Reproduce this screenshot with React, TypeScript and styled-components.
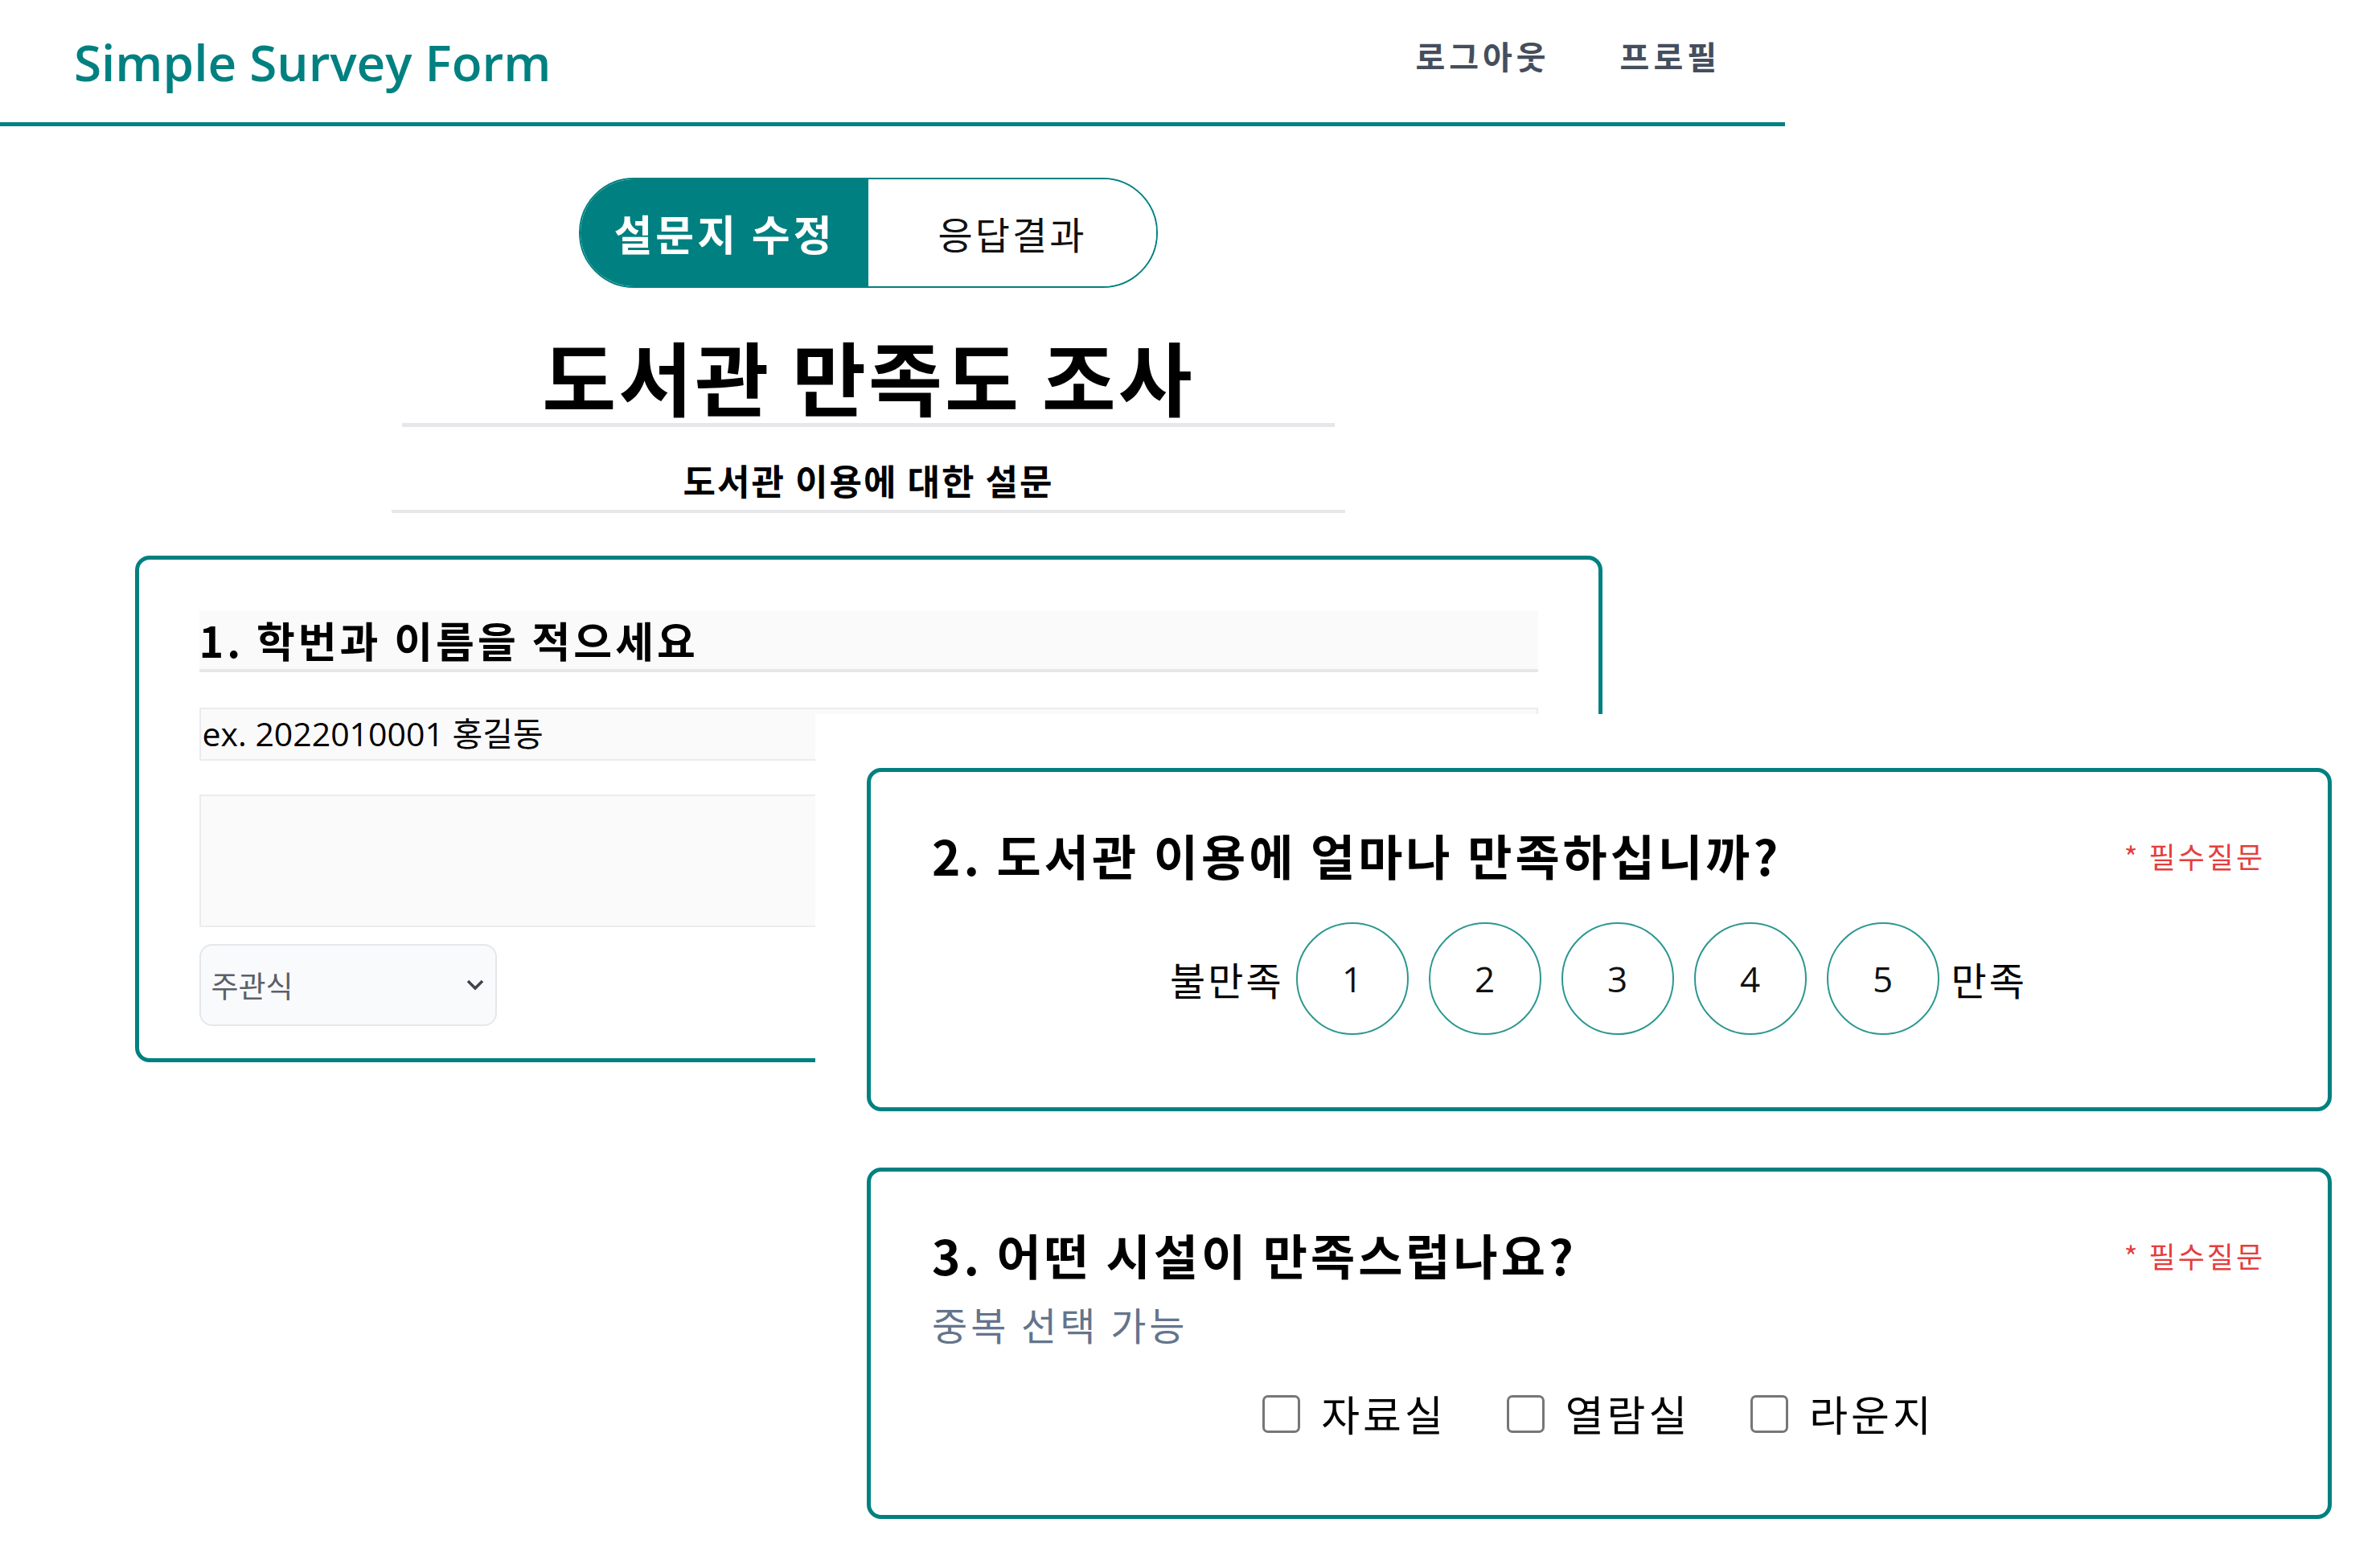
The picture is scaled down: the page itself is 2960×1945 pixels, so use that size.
import { styled, createGlobalStyle } from 'styled-components';

const teal = '#008080';

const GlobalStyle = createGlobalStyle`
  body {
    margin: 0;
    background: #fff;
    font-family: "Open Sans", "Noto Sans CJK KR", sans-serif;
    color: #000;
  }
  * { box-sizing: border-box; }
`

const Header = styled.header`
  width: 2220px;
  height: 157px;
  display: flex;
  justify-content: space-between;
  align-items: center;
  padding: 0 80px 0 92px;
  border-bottom: 5px solid ${teal};
`

const Brand = styled.h1`
  margin: 0;
  font-family: "Open Sans", sans-serif;
  font-size: 62px;
  font-weight: 600;
  color: ${teal};
  padding-top: 2px;
`

const Nav = styled.nav`
  display: flex;
  gap: 87px;
  padding-bottom: 14px;
`

const NavLink = styled.a`
  font-family: "Noto Sans CJK KR", sans-serif;
  font-size: 40px;
  font-weight: 700;
  letter-spacing: 5px;
  color: #454e5c;
  cursor: pointer;
`

const Main = styled.main`
  position: relative;
  width: 2160px;
  min-height: 1788px;
  display: flex;
  flex-direction: column;
  align-items: center;
  padding-top: 64px;
`

const Toggle = styled.div`
  display: flex;
  width: 720px;
  height: 137px;
  border: 2px solid ${teal};
  border-radius: 70px;
  overflow: hidden;
`

const ToggleItem = styled.button<{ $active?: boolean }>`
  flex: 1;
  border: none;
  margin: 0;
  font-family: "Noto Sans CJK KR", sans-serif;
  font-size: ${p => p.$active ? '52px' : '47px'};
  font-weight: ${p => p.$active ? 700 : 400};
  letter-spacing: ${p => p.$active ? '4px' : '3px'};
  background: ${p => p.$active ? teal : '#fff'};
  color: ${p => p.$active ? '#fff' : '#111'};
  cursor: pointer;
`

const SurveyTitle = styled.div`
  margin-top: 50px;
  width: 1160px;
  height: 123px;
  text-align: center;
  font-family: "Noto Sans CJK KR", sans-serif;
  font-size: 100px;
  line-height: 118px;
  font-weight: 700;
  letter-spacing: 3px;
  border-bottom: 5px solid #e5e7eb;
`

const SurveyDesc = styled.div`
  margin-top: 30px;
  width: 1186px;
  height: 77px;
  text-align: center;
  font-family: "Noto Sans CJK KR", sans-serif;
  font-size: 44px;
  line-height: 72px;
  font-weight: 700;
  letter-spacing: 2px;
  border-bottom: 4px solid #e5e7eb;
`

const Card = styled.section<{ $width?: number }>`
  width: ${p => p.$width ?? 1825}px;
  border: 5px solid ${teal};
  border-radius: 18px;
  background: #fff;
`

const EditCard = styled(Card)`
  margin-top: 53px;
  padding: 63px 75px 40px 75px;
  display: flex;
  flex-direction: column;
`

const QuestionInput = styled.div`
  height: 77px;
  background: #fafafa;
  border-bottom: 4px solid #e5e7eb;
  font-family: "Noto Sans CJK KR", sans-serif;
  font-size: 52px;
  line-height: 73px;
  font-weight: 700;
  letter-spacing: 4px;
`

const TextField = styled.div`
  margin-top: 44px;
  height: 66px;
  background: #fafafa;
  border: 2px solid #ececef;
  padding-left: 2px;
  font-size: 41px;
  line-height: 60px;
`

const TextArea = styled.div`
  margin-top: 42px;
  height: 165px;
  background: #fafafa;
  border: 2px solid #ececef;
`

const Select = styled.div`
  margin-top: 21px;
  width: 370px;
  height: 102px;
  border: 2px solid #e5e7eb;
  border-radius: 16px;
  background: #f9fafb;
  display: flex;
  align-items: center;
  justify-content: space-between;
  padding: 0 14px 0 13px;
  font-family: "Noto Sans CJK KR", sans-serif;
  font-size: 37px;
  color: #5b6068;
`

const DragLayer = styled.div`
  position: absolute;
  left: 1014px;
  top: 731px;
  width: 1946px;
  background: #fff;
  padding: 67px 0 0 64px;
  display: flex;
  flex-direction: column;
  gap: 70px;
`

const ViewCard = styled(Card)`
  padding: 64px 78px 0 76px;
`

const TitleRow = styled.div`
  display: flex;
  justify-content: space-between;
  align-items: center;
`

const QuestionTitle = styled.h2`
  margin: 0;
  font-family: "Noto Sans CJK KR", sans-serif;
  font-size: 60px;
  line-height: 78px;
  font-weight: 700;
  letter-spacing: 4px;
`

const Required = styled.span`
  font-family: "Noto Sans CJK KR", sans-serif;
  font-size: 36px;
  letter-spacing: 3px;
  color: #e53e3e;
  padding-top: 2px;
`

const Hint = styled.div`
  margin-top: 16px;
  font-family: "Noto Sans CJK KR", sans-serif;
  font-size: 48px;
  line-height: 62px;
  letter-spacing: 4px;
  color: #64748b;
`

const ScaleRow = styled.div`
  margin-top: 45px;
  padding-bottom: 90px;
  display: flex;
  justify-content: center;
  align-items: center;
  gap: 25px;
  font-family: "Noto Sans CJK KR", sans-serif;
  font-size: 48px;
  letter-spacing: 3px;
`

const ScaleLabel = styled.span<{ $side: 'left' | 'right' }>`
  margin-right: ${p => p.$side === 'left' ? '-10px' : '0'};
  margin-left: ${p => p.$side === 'right' ? '-10px' : '0'};
`

const ScaleCircle = styled.button`
  width: 140px;
  height: 140px;
  border-radius: 50%;
  border: 2px solid #2c9790;
  background: #fff;
  font-family: "Open Sans", sans-serif;
  font-size: 44px;
  color: #111;
  cursor: pointer;
`

const CheckRow = styled.div`
  margin-top: 47px;
  padding-bottom: 92px;
  display: flex;
  justify-content: center;
  gap: 75px;
`

const CheckItem = styled.label`
  display: flex;
  align-items: center;
  gap: 26px;
  font-family: "Noto Sans CJK KR", sans-serif;
  font-size: 52px;
  line-height: 68px;
  letter-spacing: 4px;
`

const CheckBox = styled.span`
  width: 47px;
  height: 47px;
  border: 3px solid #767676;
  border-radius: 7px;
  background: #fff;
`

function ChevronDown() {
  return (
    <svg width="22" height="14" viewBox="0 0 22 14" fill="none">
      <path d="M2 2 L11 11 L20 2" stroke="#3f444b" strokeWidth="3.5" />
    </svg>
  )
}

export default function App() {
  return (
    <>
      <GlobalStyle />
      <Header>
        <Brand>Simple Survey Form</Brand>
        <Nav>
          <NavLink>로그아웃</NavLink>
          <NavLink>프로필</NavLink>
        </Nav>
      </Header>
      <Main>
        <Toggle>
          <ToggleItem $active>설문지 수정</ToggleItem>
          <ToggleItem>응답결과</ToggleItem>
        </Toggle>
        <SurveyTitle>도서관 만족도 조사</SurveyTitle>
        <SurveyDesc>도서관 이용에 대한 설문</SurveyDesc>
        <EditCard>
          <QuestionInput>1. 학번과 이름을 적으세요</QuestionInput>
          <TextField>ex. 2022010001 홍길동</TextField>
          <TextArea />
          <Select>
            주관식
            <ChevronDown />
          </Select>
        </EditCard>
        <DragLayer>
          <ViewCard $width={1822}>
            <TitleRow>
              <QuestionTitle>2. 도서관 이용에 얼마나 만족하십니까?</QuestionTitle>
              <Required>* 필수질문</Required>
            </TitleRow>
            <ScaleRow>
              <ScaleLabel $side="left">불만족</ScaleLabel>
              {[1, 2, 3, 4, 5].map(n => <ScaleCircle key={n}>{n}</ScaleCircle>)}
              <ScaleLabel $side="right">만족</ScaleLabel>
            </ScaleRow>
          </ViewCard>
          <ViewCard $width={1822}>
            <TitleRow>
              <QuestionTitle>3. 어떤 시설이 만족스럽나요?</QuestionTitle>
              <Required>* 필수질문</Required>
            </TitleRow>
            <Hint>중복 선택 가능</Hint>
            <CheckRow>
              {['자료실', '열람실', '라운지'].map(label => (
                <CheckItem key={label}>
                  <CheckBox />
                  {label}
                </CheckItem>
              ))}
            </CheckRow>
          </ViewCard>
        </DragLayer>
      </Main>
    </>
  )
}
